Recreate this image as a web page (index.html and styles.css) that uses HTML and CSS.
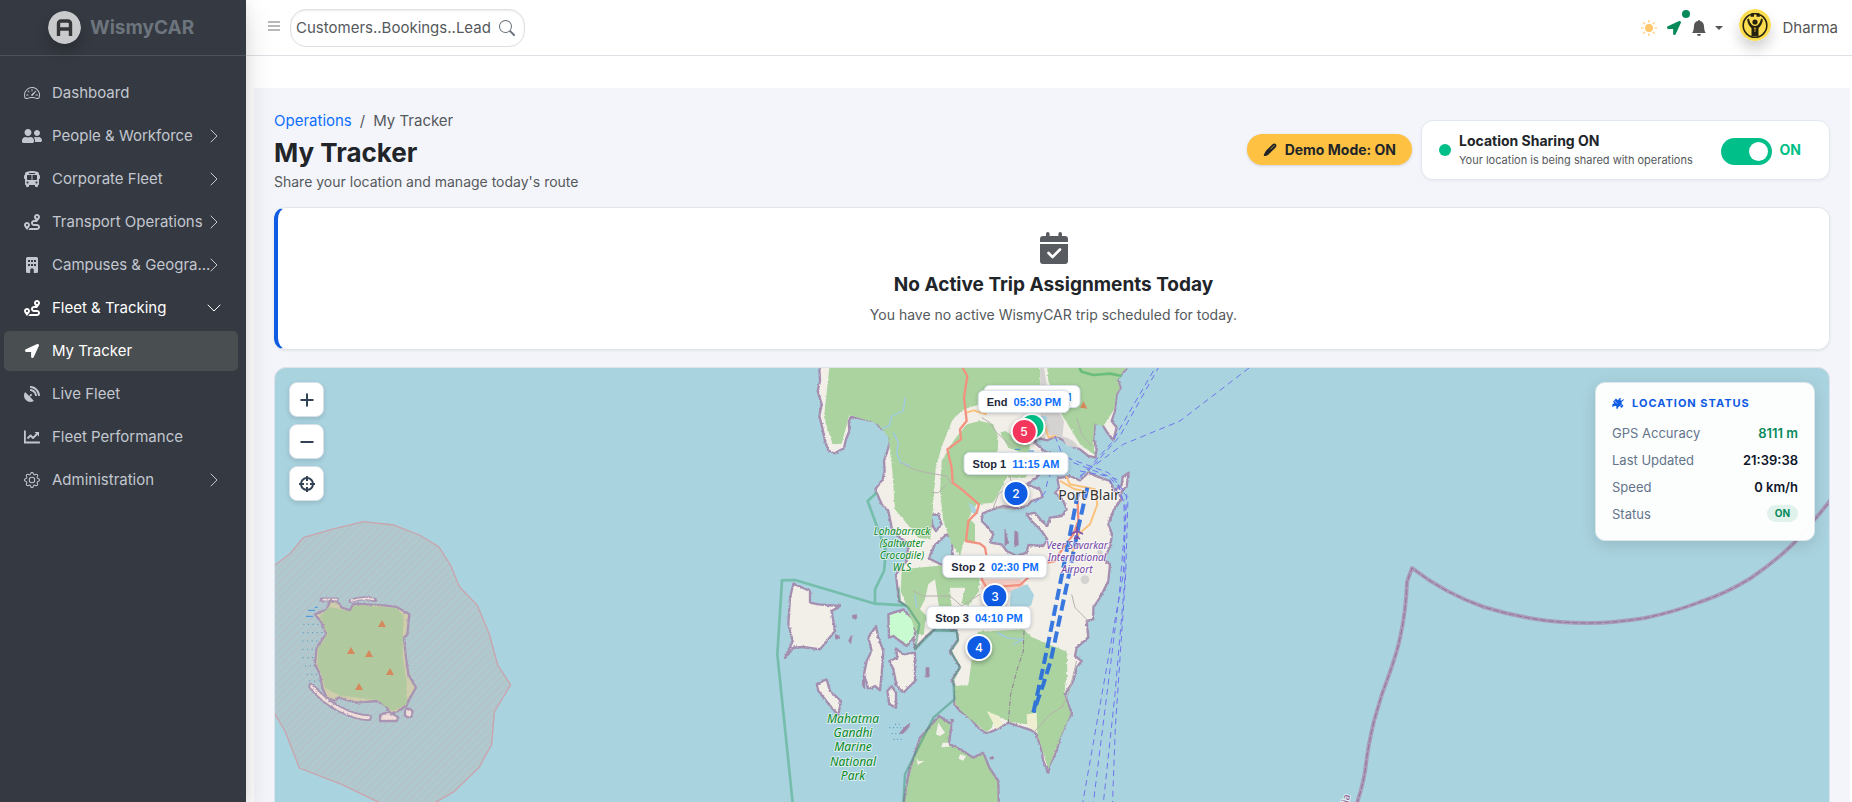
FILE: index.html
```html
<!DOCTYPE html>
<html lang="en">
<head>
<meta charset="utf-8">
<meta name="viewport" content="width=device-width, initial-scale=1">
<title>My Tracker - WismyCAR</title>
<link rel="stylesheet" href="styles.css">
</head>
<body>
<svg class="sprite" aria-hidden="true">
  <symbol id="i-dash" viewBox="0 0 16 16"><path d="M8 4a.5.5 0 0 1 .5.5V6a.5.5 0 0 1-1 0V4.500A.5.5 0 0 1 8 4M3.732 5.732a.5.5 0 0 1 .707 0l.915.914a.5.5 0 1 1-.708.708l-.914-.915a.5.5 0 0 1 0-.707M2 10a.5.5 0 0 1 .5-.5h1.586a.5.5 0 0 1 0 1H2.500A.5.5 0 0 1 2 10m9.500 0a.5.5 0 0 1 .5-.5h1.500a.5.5 0 0 1 0 1H12a.5.5 0 0 1-.5-.5m.754-4.246a.39.39 0 0 0-.527-.02L7.547 9.310a.91.91 0 1 0 1.302 1.258l3.434-4.297a.39.39 0 0 0-.029-.518z"/><path fill-rule="evenodd" d="M0 10a8 8 0 1 1 15.547 2.661c-.442 1.253-1.845 1.602-2.932 1.250C11.309 13.488 9.475 13 8 13c-1.474 0-3.310.488-4.615.911-1.087.352-2.490.003-2.932-1.250A8 8 0 0 1 0 10m8-7a7 7 0 0 0-6.603 9.329c.203.575.923.876 1.680.63C4.397 12.533 6.358 12 8 12s3.604.532 4.923.96c.757.245 1.477-.056 1.680-.631A7 7 0 0 0 8 3"/></symbol>
  <symbol id="i-people" viewBox="0 0 640 512"><path d="M192 256c61.900 0 112-50.100 112-112S253.900 32 192 32 80 82.100 80 144s50.100 112 112 112zm76.800 32h-8.300c-20.800 10-43.900 16-68.500 16s-47.600-6-68.500-16h-8.300C51.600 288 0 339.600 0 403.200V432c0 26.500 21.500 48 48 48h288c26.500 0 48-21.500 48-48v-28.800c0-63.600-51.600-115.200-115.200-115.200zM480 256c53 0 96-43 96-96s-43-96-96-96-96 43-96 96 43 96 96 96zm48 32h-3.800c-13.900 4.800-28.600 8-44.200 8s-30.300-3.200-44.200-8H432c-20.400 0-39.200 5.900-55.700 15.400 24.400 26.300 39.700 61.200 39.700 99.800v38.400c0 2.200-.5 4.300-.6 6.400H592c26.500 0 48-21.500 48-48 0-61.900-50.100-112-112-112z"/></symbol>
  <symbol id="i-bus" viewBox="0 0 512 512"><path d="M488 128h-8V80c0-44.800-99.200-80-224-80S32 35.200 32 80v48h-8c-13.250 0-24 10.740-24 24v80c0 13.250 10.750 24 24 24h8v160c0 17.670 14.330 32 32 32v32c0 17.670 14.330 32 32 32h32c17.670 0 32-14.330 32-32v-32h192v32c0 17.670 14.330 32 32 32h32c17.670 0 32-14.330 32-32v-32h6.400c16 0 25.600-12.800 25.600-25.600V256h8c13.250 0 24-10.750 24-24v-80c0-13.260-10.750-24-24-24zM160 72c0-4.420 3.580-8 8-8h176c4.420 0 8 3.580 8 8v16c0 4.420-3.580 8-8 8H168c-4.420 0-8-3.580-8-8V72zm-48 328c-17.670 0-32-14.330-32-32s14.330-32 32-32 32 14.330 32 32-14.330 32-32 32zm128-112H128c-17.670 0-32-14.330-32-32v-96c0-17.670 14.330-32 32-32h112v160zm32 0V128h112c17.670 0 32 14.330 32 32v96c0 17.670-14.330 32-32 32H272zm128 112c-17.670 0-32-14.330-32-32s14.330-32 32-32 32 14.330 32 32-14.330 32-32 32z"/></symbol>
  <symbol id="i-route" viewBox="0 0 512 512"><path d="M416 320h-96c-17.600 0-32-14.400-32-32s14.400-32 32-32h96s96-107 96-160-43-96-96-96-96 43-96 96c0 25.500 22.200 63.400 45.300 96H320c-52.900 0-96 43.100-96 96s43.100 96 96 96h96c17.600 0 32 14.400 32 32s-14.400 32-32 32H185.500c-16 24.800-33.800 47.700-47.300 64H416c52.900 0 96-43.100 96-96s-43.100-96-96-96zm0-256c17.700 0 32 14.300 32 32s-14.300 32-32 32-32-14.300-32-32 14.300-32 32-32zM96 256c-53 0-96 43-96 96s96 160 96 160 96-107 96-160-43-96-96-96zm0 128c-17.700 0-32-14.300-32-32s14.300-32 32-32 32 14.300 32 32-14.300 32-32 32z"/></symbol>
  <symbol id="i-building" viewBox="0 0 16 16"><path fill-rule="evenodd" d="M3.500 0h9A1.500 1.500 0 0 1 14 1.500v13a1.500 1.500 0 0 1-1.500 1.500H9.800v-3a1.800 1.800 0 0 0-3.600 0v3H3.500A1.500 1.500 0 0 1 2 14.500v-13A1.500 1.500 0 0 1 3.500 0zM4 3v2h2V3zm3 0v2h2V3zm3 0v2h2V3zM4 7v2h2V7zm3 0v2h2V7zm3 0v2h2V7z"/></symbol>
  <symbol id="i-arrow" viewBox="0 0 512 512"><path d="M444.520 3.520L28.740 195.420c-47.970 22.390-31.980 92.750 19.190 92.750h175.910v175.910c0 51.170 70.360 67.170 92.750 19.190l191.900-415.780c15.990-38.390-25.590-79.970-63.970-63.950z"/></symbol>
  <symbol id="i-dish" viewBox="0 0 512 512"><path d="M305.450 462.590c7.390 7.300 6.190 20.100-3 25-77.710 41.800-176.720 29.910-242.340-35.710C-5.500 386.280-17.400 287.360 24.410 209.550c4.890-9.100 17.690-10.300 25-3l116.820 116.820 27.390-27.400c-.69-2.610-1.590-5-1.590-7.810a32 32 0 1 1 32 32c-2.800 0-5.200-.89-7.800-1.590l-27.400 27.410zM511.980 303.070a16.100 16.100 0 0 1-16 17h-32.120a15.970 15.970 0 0 1-15.890-15C440.470 175.550 336.450 70.530 207.030 63.530a15.840 15.840 0 0 1-15-15.910V16.030A16.090 16.090 0 0 1 209.030.02C372.250 8.620 503.470 139.840 511.980 303.070zm-96.020-.3a16.210 16.210 0 0 1-16.110 17.300h-32.200a16.070 16.070 0 0 1-15.900-14.700c-6.900-77.020-68.110-138.920-144.920-145.230a15.940 15.940 0 0 1-14.800-15.890v-32.120a16.130 16.130 0 0 1 17.300-16.090c110.120 8.500 198.220 96.600 206.630 206.730z"/></symbol>
  <symbol id="i-chart" viewBox="0 0 16 16"><path fill="none" stroke="currentColor" stroke-width="1.800" d="M.9 1.500v12h15"/><path fill="none" stroke="currentColor" stroke-width="1.800" stroke-linejoin="round" d="M3.500 9.500l3-3 2.500 2.500 4.500-4.500"/><path d="M10.500 3H15v4.500z"/></symbol>
  <symbol id="i-gear" viewBox="0 0 16 16"><path d="M8 4.754a3.246 3.246 0 1 0 0 6.492 3.246 3.246 0 0 0 0-6.492M5.754 8a2.246 2.246 0 1 1 4.492 0 2.246 2.246 0 0 1-4.492 0"/><path d="M9.796 1.343c-.527-1.790-3.065-1.790-3.592 0l-.094.319a.873.873 0 0 1-1.255.52l-.292-.16c-1.640-.892-3.433.902-2.540 2.541l.159.292a.873.873 0 0 1-.52 1.255l-.319.094c-1.790.527-1.790 3.065 0 3.592l.319.094a.873.873 0 0 1 .52 1.255l-.16.292c-.892 1.640.901 3.434 2.541 2.540l.292-.159a.873.873 0 0 1 1.255.52l.094.319c.527 1.790 3.065 1.790 3.592 0l.094-.319a.873.873 0 0 1 1.255-.52l.292.16c1.640.893 3.434-.902 2.540-2.541l-.159-.292a.873.873 0 0 1 .52-1.255l.319-.094c1.790-.527 1.790-3.065 0-3.592l-.319-.094a.873.873 0 0 1-.52-1.255l.16-.292c.893-1.640-.902-3.433-2.541-2.540l-.292.159a.873.873 0 0 1-1.255-.52zm-2.633.283c.246-.835 1.428-.835 1.674 0l.094.319a1.873 1.873 0 0 0 2.693 1.115l.291-.16c.764-.415 1.600.42 1.184 1.185l-.159.292a1.873 1.873 0 0 0 1.116 2.692l.318.094c.835.246.835 1.428 0 1.674l-.319.094a1.873 1.873 0 0 0-1.115 2.693l.16.291c.415.764-.42 1.600-1.185 1.184l-.291-.159a1.873 1.873 0 0 0-2.693 1.116l-.094.318c-.246.835-1.428.835-1.674 0l-.094-.319a1.873 1.873 0 0 0-2.692-1.115l-.292.16c-.764.415-1.600-.42-1.184-1.185l.159-.291A1.873 1.873 0 0 0 1.945 8.930l-.319-.094c-.835-.246-.835-1.428 0-1.674l.319-.094A1.873 1.873 0 0 0 3.060 4.377l-.16-.292c-.415-.764.42-1.600 1.185-1.184l.292.159a1.873 1.873 0 0 0 2.692-1.115z"/></symbol>
  <symbol id="i-chev" viewBox="0 0 16 16"><path fill="none" stroke="currentColor" stroke-linecap="round" stroke-linejoin="round" d="M5 2l6 6-6 6"/></symbol>
  <symbol id="i-down" viewBox="0 0 16 16"><path fill="none" stroke="currentColor" stroke-linecap="round" stroke-linejoin="round" d="M2 5l6 6 6-6"/></symbol>
  <symbol id="i-search" viewBox="0 0 16 16"><path d="M11.742 10.344a6.500 6.500 0 1 0-1.397 1.398h-.001q.044.06.098.115l3.850 3.850a1 1 0 0 0 1.415-1.414l-3.850-3.850a1 1 0 0 0-.115-.1zM12 6.500a5.500 5.500 0 1 1-11 0 5.500 5.500 0 0 1 11 0"/></symbol>
  <symbol id="i-bell" viewBox="0 0 16 16"><path d="M8 16a2 2 0 0 0 2-2H6a2 2 0 0 0 2 2m.995-14.901a1 1 0 1 0-1.990 0A5 5 0 0 0 3 6c0 1.098-.5 6-2 7h14c-1.500-1-2-5.902-2-7 0-2.420-1.720-4.440-4.005-4.901"/></symbol>
</svg>

<div class="app">
  <aside class="sidebar">
    <a class="brand" href="#">
      <svg class="brand-logo" viewBox="0 0 33 33" aria-hidden="true"><circle cx="16.500" cy="16.500" r="16.500" fill="#c9cacb"/><path d="M10.500 25V12.500a2.500 2.500 0 0 1 2.500-2.500h7a2.500 2.500 0 0 1 2.500 2.500V25M10.500 18h12" fill="none" stroke="#343638" stroke-width="3.400"/></svg>
      <span>WismyCAR</span>
    </a>
    <nav class="nav" aria-label="Main">
      <a class="nav-item" href="#"><svg class="icon"><use href="#i-dash"/></svg><span class="nav-label">Dashboard</span></a>
      <a class="nav-item" href="#"><svg class="icon icon-wide"><use href="#i-people"/></svg><span class="nav-label">People &amp; Workforce</span><svg class="chev"><use href="#i-chev"/></svg></a>
      <a class="nav-item" href="#"><svg class="icon"><use href="#i-bus"/></svg><span class="nav-label">Corporate Fleet</span><svg class="chev"><use href="#i-chev"/></svg></a>
      <a class="nav-item" href="#"><svg class="icon"><use href="#i-route"/></svg><span class="nav-label">Transport Operations</span><svg class="chev"><use href="#i-chev"/></svg></a>
      <a class="nav-item" href="#"><svg class="icon"><use href="#i-building"/></svg><span class="nav-label">Campuses &amp; Geogra...</span><svg class="chev"><use href="#i-chev"/></svg></a>
      <a class="nav-item open" href="#"><svg class="icon"><use href="#i-route"/></svg><span class="nav-label">Fleet &amp; Tracking</span><svg class="chev"><use href="#i-down"/></svg></a>
      <a class="nav-item active" href="#" aria-current="page"><svg class="icon icon-small"><use href="#i-arrow"/></svg><span class="nav-label">My Tracker</span></a>
      <a class="nav-item" href="#"><svg class="icon"><use href="#i-dish"/></svg><span class="nav-label">Live Fleet</span></a>
      <a class="nav-item" href="#"><svg class="icon"><use href="#i-chart"/></svg><span class="nav-label">Fleet Performance</span></a>
      <a class="nav-item" href="#"><svg class="icon"><use href="#i-gear"/></svg><span class="nav-label">Administration</span><svg class="chev"><use href="#i-chev"/></svg></a>
    </nav>
  </aside>

  <div class="page">
    <header class="topbar">
      <button class="plain burger" type="button" aria-label="Toggle menu"><svg width="12" height="12" viewBox="0 0 12 12"><path d="M0 2h12M0 6h12M0 10h12" stroke="#a3a3a3" stroke-width="1.600"/></svg></button>
      <form class="search" role="search">
        <input type="text" placeholder="Customers..Bookings..Lead" aria-label="Search">
        <button class="plain" type="button" aria-label="Search"><svg width="16" height="16"><use href="#i-search"/></svg></button>
      </form>
      <div class="tools">
        <button class="plain sun" type="button" aria-label="Theme"><svg width="16" height="16" viewBox="0 0 16 16"><circle cx="8" cy="8" r="4"/><path d="M8 0v2.500M8 13.500V16M0 8h2.500M13.500 8H16M2.300 2.300l1.800 1.800M11.900 11.900l1.800 1.800M2.300 13.700l1.800-1.800M11.900 4.100l1.800-1.800" stroke="#ffc66b" stroke-width="1.200"/></svg></button>
        <button class="plain locate" type="button" aria-label="Location sharing"><svg width="14" height="14"><use href="#i-arrow"/></svg><span class="locate-dot"></span></button>
        <button class="plain bell" type="button" aria-label="Notifications"><svg width="16" height="16"><use href="#i-bell"/></svg><svg width="8" height="4" viewBox="0 0 8 4"><path d="M0 0h8L4 4z"/></svg></button>
        <a class="user" href="#">
          <svg class="avatar" viewBox="0 0 32 32" aria-hidden="true"><circle cx="16" cy="16" r="16" fill="#fbdc4f"/><circle cx="16" cy="16.500" r="11.800" fill="none" stroke="#24220f" stroke-width="1.600"/><path d="M10 9.500c.5 4 3 7.500 6 7.500s5.500-3.500 6-7.500l1.800.8c0 4-2.300 7-4.300 9V27h-7v-7.700c-2-2-4.300-5-4.300-9z" fill="#24220f"/><circle cx="16" cy="13" r="2.600" fill="#24220f"/><path d="M12 4.500l3-.8v4h-3.500zM17.500 3.700l3 .8.5 3.200h-3.500z" fill="#24220f"/><path d="M16 18.500v4.500M15 20l1-1.200 1 1.200" stroke="#c49a2c" fill="none"/></svg>
          <span>Dharma</span>
        </a>
      </div>
    </header>

    <main class="content">
      <div class="head">
        <div class="head-text">
          <nav class="crumbs" aria-label="Breadcrumb"><a href="#">Operations</a><span>/</span><span>My Tracker</span></nav>
          <h1>My Tracker</h1>
          <p>Share your location and manage today's route</p>
        </div>
        <button class="demo" type="button"><svg width="14" height="14" viewBox="0 0 14 14" aria-hidden="true"><path d="M1 13l-.3-.4C1.500 9.500 3 7.500 5 5.800L9.500 1.300c1.200-1.200 2.600-1 3.300-.2.800.8.900 2.200-.2 3.300L5.500 11.500C4 12.800 2.500 13.300 1 13z"/><path d="M7.500 6.200L11.500 2.200" stroke="#fec142" stroke-width=".7"/></svg>Demo Mode: ON</button>
        <section class="share">
          <span class="share-dot"></span>
          <div class="share-text">
            <strong>Location Sharing ON</strong>
            <small>Your location is being shared with operations</small>
          </div>
          <label class="switch"><input type="checkbox" checked><span>ON</span></label>
        </section>
      </div>

      <section class="empty">
        <svg width="28" height="32" viewBox="0 0 28 32" aria-hidden="true"><path fill="#585b5f" d="M6 1.800a1.800 1.800 0 0 1 3.600 0V4h8.800V1.800a1.800 1.800 0 0 1 3.600 0V4h3a3 3 0 0 1 3 3v3H0V7a3 3 0 0 1 3-3h3zM0 12h28v17a3 3 0 0 1-3 3H3a3 3 0 0 1-3-3z"/><path d="M8.500 21l4 4 7.500-7.500" fill="none" stroke="#fff" stroke-width="2.600" stroke-linecap="round" stroke-linejoin="round"/></svg>
        <h2>No Active Trip Assignments Today</h2>
        <p>You have no active WismyCAR trip scheduled for today.</p>
      </section>

      <section class="map" aria-label="Map">
        <div class="map-canvas">
          <svg class="tiles" viewBox="275 367 1554 600" width="1554" height="600" aria-hidden="true">
            <defs>
              <pattern id="hatch" width="16" height="16" patternUnits="userSpaceOnUse" patternTransform="rotate(45)"><path d="M0 0v16" stroke="#c6a3aa" stroke-width="3" opacity=".5"/></pattern>
              <filter id="rough" x="-5%" y="-5%" width="110%" height="110%"><feTurbulence type="fractalNoise" baseFrequency=".12" numOctaves="2" seed="4"/><feDisplacementMap in="SourceGraphic" scale="8" xChannelSelector="R" yChannelSelector="G"/></filter>
            </defs>

            <g transform="translate(270 500) scale(.33333)">
              <path d="M-40 230L15 192 60 158 100 110 185 85 280 62 370 72 448 102 507 138 543 195 568 257 622 313 658 400 683 492 722 552 673 632 665 730 628 798 552 872 460 925 370 925 215 850 88 801 45 690 15 640-20 580z" fill="#b0c9cf" stroke="#caa4ad" stroke-width="4"/>
              <path d="M-40 230L15 192 60 158 100 110 185 85 280 62 370 72 448 102 507 138 543 195 568 257 622 313 658 400 683 492 722 552 673 632 665 730 628 798 552 872 460 925 370 925 215 850 88 801 45 690 15 640z" fill="url(#hatch)"/>
              <path d="M100 370h62M98 395h65M97 420h50M97 445h45M98 470h38M105 495h32M110 520h38M118 540h34" stroke="#4a93bd" stroke-width="3" stroke-dasharray="3 11"/>
              <path d="M114 328h21M108 346h21M135 319h8" stroke="#3d93df" stroke-width="3"/>
              <g filter="url(#rough)" stroke-linejoin="round" stroke-linecap="round">
                <path d="M125 556Q160 600 210 625T296 650" fill="none" stroke="#a995b3" stroke-width="20"/>
                <path d="M125 556Q160 600 210 625T296 650" fill="none" stroke="#efdeda" stroke-width="9"/>
                <path d="M155 296h45M242 300q36-14 74-3" fill="none" stroke="#a995b3" stroke-width="13"/>
                <path d="M160 296h40M244 300q36-12 66-5" fill="none" stroke="#efdeda" stroke-width="5"/>
                <path d="M330 642q30-15 55 8l-5 10h-50zM405 630q10-15 22 0l0 14q-10 10-22 0z" fill="#efdeda" stroke="#a995b3" stroke-width="7"/>
                <path d="M135 340L170 325 180 300 205 305 215 320 240 328 250 308 340 313 380 318 418 340 412 400 402 410 408 470 415 520 438 560 415 600 410 615 365 640 345 612 320 600 260 605 205 590 195 600 170 590 157 560 150 520 135 490 140 440 168 400 155 365z" fill="#cfcdab" stroke="#a995b3" stroke-width="7"/>
                <path d="M150 345L180 318 240 332 255 312 380 322 400 345 398 470 410 540 410 610 368 630 320 596 210 584 165 560 155 520 142 490 146 440 174 400z" fill="#b1c99e"/>
              </g>
              <g fill="#d5895d"><path d="M324 378l12-21 12 21zM231 459l12-21 12 21zM285 468l12-21 12 21zM348 522l12-21 12 21zM255 567l12-21 12 21z"/></g>
            </g>

            <g transform="translate(760 360) scale(.33333)">
              <g filter="url(#rough)" stroke="#a58fb0" stroke-width="7" stroke-linejoin="round">
                <path fill="#f2efe9" d="M177 0L180 60 173 90 185 130 178 165 188 205 195 240 205 268 222 278 240 268 252 262 258 235 268 210 266 180 275 168 300 172 325 178 345 180 362 202 385 215 390 240 382 270 372 300 374 330 368 355 346 385 352 400 365 430 385 450 390 475 395 500 420 530 445 548 440 600 408 640 412 680 416 720 440 735 466 770 476 795 460 830 465 862 500 825 530 800 590 808 594 835 570 870 600 920 575 955 586 980 583 1030 600 1050 630 1070 655 1100 680 1118 710 1105 745 1085 790 1100 815 1108 830 1120 845 1170 850 1200 865 1235 870 1210 890 1170 900 1130 920 1080 935 1060 925 1030 915 1000 940 960 950 920 965 900 945 885 950 860 985 830 980 780 1000 775 1000 740 1020 710 1045 660 1050 610 1030 595 1050 560 1056 520 1045 490 1060 450 1085 412 1078 400 1100 375 1106 335 1088 348 1085 372 1062 390 1050 360 1020 350 985 335 960 358 930 345 892 352 897 380 885 395 910 420 920 445 905 465 870 470 862 495 845 480 825 455 800 460 815 480 845 510 862 535 850 555 805 552 800 575 770 585 740 570 725 550 690 545 700 520 680 495 665 480 668 458 690 448 730 435 775 443 800 435 815 420 848 408 840 385 800 370 830 350 850 320 880 285 850 268 825 245 830 230 862 238 890 225 930 252 960 265 985 285 1006 290 1010 265 1000 230 1005 192 1020 180 1040 212 1060 238 1070 200 1055 180 1065 150 1070 100 1082 80 1072 55 1098 25 1120 0z"/>
                <path fill="#f2efe9" d="M100 668L150 690 150 725 175 730 240 735 215 750 225 810 180 865 130 858 100 860 75 892 98 840 85 790 90 710z"/>
                <path fill="#f2efe9" d="M348 795L355 830 370 870 365 940 360 988 345 975 325 985 312 940 320 900 335 870 325 830z"/>
                <path fill="#f2efe9" d="M408 862L430 880 465 875 465 960 430 995 410 975 400 925 388 900 412 890z"/>
                <path fill="#f2efe9" d="M395 975L408 995 408 1040 388 1030 382 990z"/>
                <path fill="#f2efe9" d="M200 955L210 990 243 1020 235 1062 215 1040 175 990 170 970z"/>
                <path fill="#c8fbd0" d="M385 760L430 745 465 780 465 825 440 855 400 825 387 830z"/>
                <path fill="#abd3a0" d="M537 1065L575 1090 567 1148 600 1165 640 1190 670 1175 688 1220 715 1260 720 1500 430 1500 432 1320 445 1240 480 1130z"/>
                <path fill="#9c84ab" stroke-width="3" d="M278 762h12v10h-12zM227 822h10v12h-10zM266 838l10-14-4 24zM498 920h9v28h-9zM308 955l6-10v38l-7-10zM420 1115q15-20 30-28-8 24-25 32zM572 1075h8v8h-8zM690 1188h10v6h-10zM735 505l10 40-10 10zM765 510l8 2 2 40-12 5z"/>
                <path fill="#a9d3df" d="M512 462L535 460 545 490 528 510 518 495zM560 520l18 12-2 50-30 30-40-20 18-40z"/>
              </g>
              <g filter="url(#rough)" fill="#abd3a0">
                <path d="M210 0H840V130H660L612 145 578 175 548 250 527 320 522 400 514 500 512 535 475 530 405 445 397 330 385 228 350 186 268 163 245 248 218 250 192 170z"/>
                <path d="M660 180L700 190 715 230 712 300 745 340 730 370 700 425 650 430 625 470 645 490 645 545 612 540 600 585 575 550 550 480 540 390 545 300 580 240 620 190z"/>
                <path d="M860 0H1110L1072 58 1080 80 1068 100 1063 145 1030 195 1003 190 1000 240 1005 283 960 250 905 160 865 60z"/>
                <path d="M720 215L735 210 810 250 805 282 745 260zM740 340h70l-15 10h-50z"/>
                <path d="M425 625L560 612 660 620 657 690 625 735 605 725 615 680 570 680 575 740 600 760 540 775 515 800 495 780 492 820 470 820 440 735 422 690z"/>
                <path d="M655 812L790 805 815 828 920 872 922 930 912 1000 932 1060 900 1130 865 1225 848 1170 830 1110 815 1075 800 1090 745 1082 710 1062 695 1100 680 1114 650 1090 604 1050 587 1030 583 975 625 972 632 920 640 850z"/>
              </g>
              <path d="M680 1050l35 15 15 25-20 15zM800 1060l30-5 2 60-30-20z" fill="#eeefd0"/>
              <path d="M535 1085l20 30-15 10-12-5zM548 1145h18l2 12-24 2zM600 1180l18 5-8 14-14-6zM470 1190l5 10 18 0-20 12z" fill="#f2efe9"/>
              <path d="M505 670l20-15 10 70 10 45-45-5-20-20 15-30z" fill="#f2efe9"/>
              <path d="M840 21h12l10 60 50 100-5 50-40-10-25-60z" fill="#d5d3d2"/>
              <path d="M905 225q40 10 50 35l-35-5z" fill="#d5d3d2"/>
              <path d="M670 655h110l20 25-50 15-90-10z" fill="#f4cec4"/>
              <path d="M752 690l50-20 20 32-8 30-22 12-42-10z" fill="#a9d3df"/>
              <path d="M625 425l18 10 12 25-20-5zM820 510l25 5-15 15zM815 165h45v15h-45z" fill="#a9d3df"/>
              <circle cx="975" cy="656" r="13" fill="#d5d3d2"/><circle cx="1020" cy="575" r="8" fill="#d5d3d2"/>

              <g fill="none" stroke-linejoin="round">
                <path d="M435 110L430 150 395 165 388 195 365 202M400 215L415 245 410 275 422 305 450 315M465 700L470 740M712 815L740 830 790 835 760 850" stroke="#9fc9e6" stroke-width="4"/>
                <path d="M422 305L460 325 500 335 560 345 575 370M515 395L535 395 560 370M665 170L690 185 710 215 760 260M950 170L965 220 995 255M460 690L490 705 570 705 605 735 660 700M765 445L700 440 715 400 740 380M935 700L945 740 985 780M910 1035L870 1060 825 1110M950 900L925 1000 905 1040M700 310L740 315 760 380" stroke="#b5b1ad" stroke-width="3"/>
                <path d="M792 810L790 870 770 930 752 1000 745 1085" stroke="#8e7b93" stroke-width="3" stroke-dasharray="14 5 3 5"/>
                <path d="M620 155L640 148 680 160M855 195L865 228 890 225M918 345L930 370 1005 385 1012 430 990 490 955 520 935 580M900 360L945 385 975 390" stroke="#fac27c" stroke-width="6"/>
                <path d="M608 21L622 45 612 110 620 180 600 205 603 235 562 265 575 320 578 365 605 385 657 430 650 455 625 480 618 540 660 548 675 560 682 600 665 655 680 680 780 672 815 640M862 605L885 600 900 575 940 520 955 480 952 400" stroke="#f3917f" stroke-width="7"/>
                <path d="M958 21L965 32 1000 42 1050 38 1085 45" stroke="#6bbd7e" stroke-width="8"/>
                <path d="M350 395L323 420 378 570 372 630 345 685 345 728 435 733M345 728L105 657 66 658 52 880 98 1326 108 1460" stroke="#68b99d" stroke-width="8" opacity=".8"/>
                <path d="M416 680L420 722 445 740 478 790 465 865 520 808 590 810 594 840 572 870 600 918 580 955 583 1015 520 1070 435 1240 430 1326" stroke="#3f9376" stroke-width="7" opacity=".5"/>
              </g>
              <path d="M960 140l11-19 11 22z" fill="#d5895d"/>
              <g fill="none" stroke="#6f74ec" stroke-width="3" stroke-dasharray="18 13">
                <path d="M1180 30L1055 245 960 350M1198 15L1080 225 985 330M1467 21L1260 180 1090 250 960 345M920 290L1045 335 1100 400 1090 640 1070 750 968 1326M940 305L1070 355 1098 450 1078 700 1000 1326M960 330L1040 345 1092 420 1095 650 1065 1000 1030 1326M1050 350L1104 410 1097 640 1066 1100 1057 1340M885 225L910 290 865 350 855 395 825 425"/>
              </g>
              <g fill="none" stroke="#1f68de" stroke-width="12" stroke-dasharray="34 15" opacity=".88">
                <path d="M982 380L955 500 925 650 905 745 889 820 872 900 850 970 820 1055"/>
                <path d="M954 395L930 520 902 660 880 770 864 850 845 940 820 1055"/>
              </g>
              <path d="M765 265h16M806 270h16" stroke="#3d93df" stroke-width="3"/>
              <path d="M388 1100h35M395 1118h28M400 1135h25M405 1090h20" stroke="#4a93bd" stroke-width="3" stroke-dasharray="3 8"/>
            </g>

            <path d="M1857 465C1838 490 1815 520 1794 542C1781 555 1767 566 1751 577C1735 587 1718 595 1700 601C1682 608 1664 613 1645 617C1626 620 1608 622 1590 622C1571 622 1553 621 1535 618C1517 615 1500 611 1484 606C1458 597 1434 584 1412 567L1407 581Q1406 610 1400 637C1396 656 1389 674 1382 693L1374 720Q1368 745 1366 763T1357 802L1340 850" fill="none" stroke="#a99dbb" stroke-width="4" stroke-linejoin="round"/>
            <path d="M1857 465C1838 490 1815 520 1794 542C1781 555 1767 566 1751 577C1735 587 1718 595 1700 601C1682 608 1664 613 1645 617C1626 620 1608 622 1590 622C1571 622 1553 621 1535 618C1517 615 1500 611 1484 606C1458 597 1434 584 1412 567L1407 581Q1406 610 1400 637C1396 656 1389 674 1382 693L1374 720Q1368 745 1366 763T1357 802L1340 850" fill="none" stroke="#96709b" stroke-width="1" stroke-dasharray="6 2"/>

            <path d="M1077 526v12M1071 533l6-3 6 3M1074 538l3-2 3 2" fill="none" stroke="#7d4fa8" stroke-width="1.600"/>
            <g class="map-text" text-anchor="middle">
              <text class="city" x="1089" y="499">Port Blair</text>
              <g class="park small"><text x="902" y="534">Lohabarrack</text><text x="902" y="546">(Saltwater</text><text x="902" y="558">Crocodile)</text><text x="902" y="570">WLS</text></g>
              <g class="air small"><text x="1077" y="548">Veer Savarkar</text><text x="1077" y="560">International</text><text x="1077" y="572">Airport</text></g>
              <g class="park"><text x="853" y="722">Mahatma</text><text x="853" y="736">Gandhi</text><text x="853" y="750">Marine</text><text x="853" y="765">National</text><text x="853" y="779">Park</text></g>
              <text class="country" transform="translate(1347 806) rotate(-75)">India</text>
            </g>
          </svg>

          <div class="pin pin-start"><span class="pin-label"><b>Start</b><time>08:30 AM</time></span><span class="pin-dot green">1</span></div>
          <div class="pin pin-end"><span class="pin-label"><b>End</b><time>05:30 PM</time></span><span class="pin-dot red">5</span></div>
          <div class="pin pin-one"><span class="pin-label"><b>Stop 1</b><time>11:15 AM</time></span><span class="pin-dot">2</span></div>
          <div class="pin pin-two"><span class="pin-label"><b>Stop 2</b><time>02:30 PM</time></span><span class="pin-dot">3</span></div>
          <div class="pin pin-three"><span class="pin-label"><b>Stop 3</b><time>04:10 PM</time></span><span class="pin-dot">4</span></div>
        </div>

        <div class="zoom">
          <button type="button" aria-label="Zoom in"><svg viewBox="0 0 16 16"><path d="M8 1.500v13M1.500 8h13"/></svg></button>
          <button type="button" aria-label="Zoom out"><svg viewBox="0 0 16 16"><path d="M1.500 8h13"/></svg></button>
          <button type="button" aria-label="Center on my location"><svg viewBox="0 0 16 16"><circle cx="8" cy="8" r="6"/><path d="M8 0v5M8 11v5M0 8h5M11 8h5M7.300 8h1.400"/></svg></button>
        </div>

        <section class="status">
          <h3><svg width="12" height="12" viewBox="0 0 12 12" aria-hidden="true"><path d="M1 4.500l3-3 1.800 1.800L8 .8l1 1-.8 1.200 1 .8L11.500 2l.3 1L9.800 4.800l-.3 2L11.500 8.500 9.800 11 7.500 9 6 10.500 5.500 12l-1.300-.5.3-2L3 8.800.3 10 .2 7.500l2-1.200z"/><path d="M2 3.500l3 3M8 9.500l2-2M1 1.500l1 1M10 .8l.8.800" stroke="#fff" stroke-width=".7"/></svg>LOCATION STATUS</h3>
          <dl>
            <div><dt>GPS Accuracy</dt><dd class="good">8111 m</dd></div>
            <div><dt>Last Updated</dt><dd>21:39:38</dd></div>
            <div><dt>Speed</dt><dd>0 km/h</dd></div>
            <div><dt>Status</dt><dd><span class="badge">ON</span></dd></div>
          </dl>
        </section>
      </section>
    </main>
  </div>
</div>
</body>
</html>
```
FILE: styles.css
```css
* { box-sizing: border-box; }

body {
  margin: 0;
  background: #fff;
  color: #212529;
  font: 400 15px/24px Inter, "Liberation Sans", sans-serif;
}

h1, h2, h3, p, dl, dd { margin: 0; }
a { color: inherit; text-decoration: none; }
svg { display: block; fill: currentColor; flex: none; }
button, input { font: inherit; color: inherit; }

.sprite { position: absolute; width: 0; height: 0; }
.plain { display: flex; align-items: center; padding: 0; border: 0; background: none; }

.app { display: flex; height: 100vh; overflow: hidden; }

/* Sidebar */
.sidebar {
  position: relative;
  z-index: 2;
  flex: none;
  width: 246px;
  background: #353941;
  color: #c2c7d0;
  box-shadow: 0 14px 28px rgba(0, 0, 0, .14), 0 0 10px rgba(0, 0, 0, .08);
}
.brand {
  display: flex;
  align-items: center;
  gap: 9px;
  height: 56px;
  padding-left: 48px;
  border-bottom: 1px solid #4b545c;
  color: #6c757d;
  font-size: 19px;
  font-weight: 700;
}
.brand-logo { width: 33px; height: 33px; border-radius: 50%; box-shadow: 0 8px 14px rgba(0, 0, 0, .2); }
.nav { display: flex; flex-direction: column; gap: 3px; padding: 17px 8px 0 4px; }
.nav-item {
  display: flex;
  align-items: center;
  height: 40px;
  padding: 0 16px 0 20px;
  border-radius: 5px;
  white-space: nowrap;
}
.nav-label { flex: 1; min-width: 0; margin-left: 12px; }
.icon { width: 16px; height: 16px; }
.icon-wide { width: 20px; margin: 0 -2px; }
.icon-small { width: 14px; height: 14px; margin: 0 1px; }
.chev { width: 16px; height: 16px; }
.open { color: #fff; }
.active { background: #494e51; color: #fff; }

/* Top bar */
.page { flex: 1; min-width: 0; display: flex; flex-direction: column; }
.topbar {
  flex: none;
  display: flex;
  align-items: center;
  height: 56px;
  padding: 0 14px 0 22px;
  border-bottom: 1px solid #dee2e6;
  color: #555;
}
.burger { margin: 0 10px 4px 0; }
.search {
  display: flex;
  align-items: center;
  width: 235px;
  height: 38px;
  padding: 0 9px 0 5px;
  border: 1px solid #dedfe3;
  border-radius: 16px;
  box-shadow: inset 0 1px 2px rgba(0, 0, 0, .08);
}
.search input { flex: 1; min-width: 0; padding: 0; border: 0; outline: 0; background: none; }
.search input::placeholder { color: #55595c; opacity: 1; }
.search .plain { color: #6c757d; margin-left: 4px; }
.tools { display: flex; align-items: center; gap: 10px; margin-left: auto; }
.sun { color: #ffc66b; }
.locate { position: relative; color: #078a5a; }
.locate-dot { position: absolute; top: -11px; right: -9px; width: 8px; height: 8px; border-radius: 50%; background: #078a5a; }
.bell { gap: 8px; }
.user { display: flex; align-items: center; gap: 11px; margin-left: 6px; }
.avatar { width: 32px; height: 32px; margin-bottom: 6px; border-radius: 50%; box-shadow: 0 8px 14px rgba(0, 0, 0, .18); }

/* Content */
.content {
  flex: 1;
  display: flex;
  flex-direction: column;
  gap: 17px;
  margin: 32px 2px 0 8px;
  padding: 21px 20px 0;
  background: #f4f5fa;
}
.head { flex: none; display: flex; align-items: center; gap: 9px; height: 81px; }
.head-text { flex: 1; }
.crumbs { display: flex; gap: 8px; color: #55595c; }
.crumbs a { color: #0d6efd; }
.head h1 { font-size: 26px; line-height: 40px; font-weight: 700; }
.head p, .empty p { font-size: 14px; line-height: 18px; color: #55595c; }
.demo {
  display: flex;
  align-items: center;
  gap: 8px;
  height: 31px;
  padding: 0 16px;
  border: 0;
  border-radius: 16px;
  background: #fec142;
  box-shadow: 0 1px 3px rgba(0, 0, 0, .14);
  font-size: 14px;
  font-weight: 700;
}
.share {
  display: flex;
  align-items: center;
  width: 409px;
  height: 60px;
  padding: 0 28px 0 17px;
  border: 1px solid #e2e8f0;
  border-radius: 12px;
  background: #fff;
  box-shadow: 0 1px 3px rgba(0, 0, 0, .05);
}
.share-dot { width: 12px; height: 12px; border-radius: 50%; background: #00bf88; }
.share-text { flex: 1; margin-left: 8px; white-space: nowrap; }
.share-text strong { display: block; font-size: 14px; line-height: 20px; font-weight: 700; }
.share-text small { display: block; font-size: 11px; line-height: 18px; color: #55595c; }
.switch { display: flex; align-items: center; gap: 8px; color: #00bf88; font-size: 14px; font-weight: 700; }
.switch input {
  appearance: none;
  display: flex;
  align-items: center;
  justify-content: flex-end;
  width: 51px;
  height: 27px;
  margin: 3px 0 0;
  padding: 4px;
  border-radius: 14px;
  background: #00bf88;
}
.switch input::before { content: ""; width: 19px; height: 19px; border-radius: 50%; background: #fff; }
.switch input:not(:checked) { justify-content: flex-start; background: #adb5bd; }

.empty {
  flex: none;
  display: flex;
  flex-direction: column;
  align-items: center;
  height: 143px;
  padding-top: 24px;
  border: 1px solid #e2e6ea;
  border-left: 4px solid #0f5be3;
  border-radius: 12px;
  background: #fff;
  box-shadow: 0 1px 3px rgba(0, 0, 0, .07);
}
.empty h2 { margin-top: 9px; font-size: 19px; line-height: 24px; font-weight: 700; }
.empty p { margin-top: 9px; }

/* Map */
.map {
  position: relative;
  flex: 1 0 560px;
  overflow: hidden;
  border: 1px solid #dce3ea;
  border-radius: 12px;
  background: #a9d3df;
}
.map-canvas { position: absolute; top: 0; left: 50%; width: 1554px; height: 600px; margin-left: -777px; }
.map-text { font-family: "Noto Sans", sans-serif; font-size: 12px; stroke: rgba(255, 255, 255, .6); stroke-width: 2px; stroke-linejoin: round; }
.map-text text { paint-order: stroke; }
.city { font-size: 14px; fill: #333; }
.park { font-style: italic; fill: #0a8a25; }
.air { font-style: italic; fill: #7245a8; }
.small { font-size: 10px; }
.country { font-size: 10px; fill: #88568f; }

.pin {
  position: absolute;
  display: flex;
  flex-direction: column;
  align-items: center;
  gap: 5px;
  transform: translateX(-50%);
  font-family: "Liberation Sans", Arial, sans-serif;
}
.pin-label {
  display: flex;
  gap: 6px;
  align-items: center;
  height: 23px;
  padding: 0 8px;
  border: 1px solid #d8e0ea;
  border-radius: 6px;
  background: #fff;
  box-shadow: 0 1px 4px rgba(0, 0, 0, .2);
  color: #1e293b;
  font-size: 11px;
  font-weight: 700;
  white-space: nowrap;
}
.pin-label time { color: #0d6efd; }
.pin-dot {
  display: grid;
  place-items: center;
  width: 27px;
  height: 27px;
  border: 2px solid #fff;
  border-radius: 50%;
  background: #0f5be3;
  box-shadow: 0 2px 5px rgba(0, 0, 0, .3);
  color: #fff;
  font: 500 12px/12px Inter, sans-serif;
}
.green { background: #00bf88; }
.red { background: #f5365c; }
.pin-start { left: 757px; top: 17px; }
.pin-end { left: 749px; top: 22px; }
.pin-one { left: 741px; top: 84px; }
.pin-two { left: 720px; top: 187px; }
.pin-three { left: 704px; top: 238px; }

.zoom { position: absolute; top: 14px; left: 14px; display: grid; gap: 7px; }
.zoom button {
  display: grid;
  place-items: center;
  width: 35px;
  height: 35px;
  padding: 0;
  border: 1px solid #d8e0e8;
  border-radius: 8px;
  background: #fff;
  box-shadow: 0 2px 5px rgba(0, 0, 0, .12);
  color: #334155;
}
.zoom svg { width: 16px; height: 16px; fill: none; stroke: currentColor; stroke-width: 2px; }

.status {
  position: absolute;
  top: 14px;
  right: 14px;
  width: 220px;
  padding: 10px 16px 13px;
  border: 1px solid #dde6ec;
  border-radius: 10px;
  background: rgba(255, 255, 255, .97);
  box-shadow: 0 4px 16px rgba(0, 0, 0, .12);
  font-size: 13px;
}
.status h3 { display: flex; align-items: center; gap: 8px; height: 20px; margin-bottom: 6px; color: #0f5be3; font-size: 11px; letter-spacing: 1px; }
.status dl > div { display: flex; align-items: center; justify-content: space-between; height: 27px; }
.status dt { color: #64748b; }
.status dd { color: #0f172a; font-weight: 600; }
.status .good { color: #078a5a; }
.badge { display: block; padding: 0 8px; border-radius: 9px; background: #e1f2ec; color: #078a5a; font-size: 10px; line-height: 17px; font-weight: 700; }
```
